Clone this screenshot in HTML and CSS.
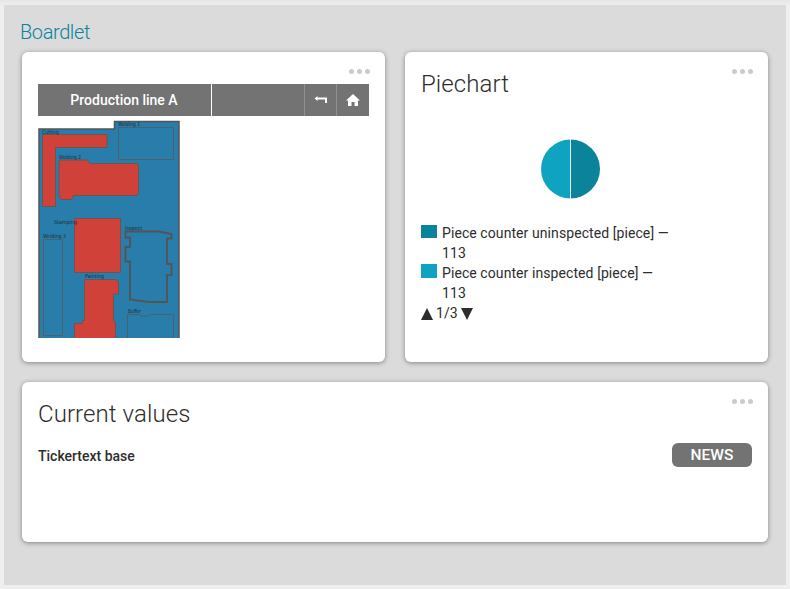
FILE: index.html
```html
<!DOCTYPE html>
<html lang="en">
<head>
<meta charset="utf-8">
<title>Boardlet</title>
<link rel="stylesheet" href="styles.css">
</head>
<body>
<main class="board">
  <h1 class="board-title">Boardlet</h1>
  <div class="cards">
    <section class="card card-plan">
      <div class="dots"><i></i><i></i><i></i></div>
      <div class="toolbar">
        <div class="line-name">Production line A</div>
        <div class="spacer"></div>
        <div class="tool">
          <svg width="14" height="10" viewBox="0 0 14 10"><path d="M.5 3.500 3.500 1V2.500H13V8H11V4.500H3.500V6Z" fill="#fff"/></svg>
        </div>
        <div class="tool">
          <svg width="14" height="12" viewBox="0 0 14 12"><path d="M7 0 14 6.500H12V12H8.500V8H5.500V12H2V6.500H0Z" fill="#fff"/></svg>
        </div>
      </div>
      <svg class="plan" width="142" height="218" viewBox="38 120 142 218">
        <path class="floor" d="M39 340V129H114.500V121.500H179V340"/>
        <g class="free">
          <path d="M118.500 127.500H173.500V159.500H118.500Z"/>
          <path d="M43.500 239.500H62.500V335.500H43.500Z"/>
          <path d="M127.500 340V314.500H140L141 316H149L150.500 314.500H173.500V336L171 340"/>
          <path class="thick" d="M125.500 231.500H159L171.500 234V238.500H167V264H171.500V275H167V302H148L130 299.500V261.500H125.500V247H130V237.500H125.500Z"/>
        </g>
        <g class="busy">
          <path d="M42.500 134.500H107V147.500H55.500V206.500H42.500Z"/>
          <path d="M59 160H87.500L89.500 163.500H137L138.500 166V192.500L137 195.500H73.500L71.500 199.500H61L59 196Z"/>
          <path d="M74.500 218.500H120.500V272.500H74.500Z"/>
          <path d="M84.500 279.500H115.500L118.500 281.500V294H113.500V320.500L115.500 323V340H74.500V323.500H82.500V320.500H84.500Z"/>
        </g>
        <g class="labels">
          <text x="42" y="134" textLength="17" lengthAdjust="spacingAndGlyphs">Cutting</text>
          <text x="118" y="126" textLength="22" lengthAdjust="spacingAndGlyphs">Welding 1</text>
          <text x="59" y="159" textLength="22" lengthAdjust="spacingAndGlyphs">Welding 2</text>
          <text x="54" y="224" textLength="23" lengthAdjust="spacingAndGlyphs">Stamping</text>
          <text x="43" y="238" textLength="23" lengthAdjust="spacingAndGlyphs">Welding 3</text>
          <text x="125" y="230" textLength="17" lengthAdjust="spacingAndGlyphs">Inspect</text>
          <text x="85" y="278" textLength="19" lengthAdjust="spacingAndGlyphs">Painting</text>
          <text x="128" y="313" textLength="13" lengthAdjust="spacingAndGlyphs">Buffer</text>
        </g>
      </svg>
    </section>
    <section class="card card-pie">
      <div class="dots"><i></i><i></i><i></i></div>
      <h2 class="card-title">Piechart</h2>
      <svg class="pie" width="60" height="60" viewBox="0 0 60 60">
        <path d="M29.500 .5A29.500 29.500 0 0 1 29.500 59.500Z" fill="#0a839b"/>
        <path d="M29.500 .5A29.500 29.500 0 0 0 29.500 59.500Z" fill="#0fa3c2"/>
        <path d="M29 0h1v60h-1z" fill="#fff"/>
      </svg>
      <div class="legend">
        <div class="entry"><i class="swatch dark"></i><div>Piece counter uninspected [piece] —<br>113</div></div>
        <div class="entry"><i class="swatch light"></i><div>Piece counter inspected [piece] —<br>113</div></div>
        <div class="pager">
          <svg width="12" height="12" viewBox="0 0 12 12"><path d="M6 0 12 12H0Z"/></svg>
          <span>1/3</span>
          <svg width="12" height="12" viewBox="0 0 12 12"><path d="M0 0H12L6 12Z"/></svg>
        </div>
      </div>
    </section>
    <section class="card card-values">
      <div class="dots"><i></i><i></i><i></i></div>
      <h2 class="card-title">Current values</h2>
      <div class="ticker"><span>Tickertext base</span><b class="news">NEWS</b></div>
    </section>
  </div>
</main>
</body>
</html>
```
FILE: styles.css
```css
* { box-sizing: border-box; }
body {
  margin: 0;
  height: 589px;
  padding: 5px 4px 4px;
  background: linear-gradient(#e6e6e6, #efefef 6px);
  font: 14px/20px Roboto, sans-serif;
  color: #2d2d2d;
  overflow: hidden;
}
.board { height: 580px; padding: 15px 18px 0; background: #dbdbdb; }
.board-title {
  margin: 0 0 8px -2px;
  font-size: 20px;
  line-height: 24px;
  font-weight: 300;
  letter-spacing: -.4px;
  color: #0a839b;
}
.cards { display: grid; grid-template-columns: 363px 363px; grid-template-rows: 310px 160px; gap: 20px; }
.card {
  position: relative;
  padding: 16px;
  background: #fff;
  border-radius: 6px;
  box-shadow: 0 1px 5px rgba(0, 0, 0, .4);
}
.card-plan { padding-top: 32px; }
.card-values { grid-column: 1 / 3; }
.dots { position: absolute; top: 17px; right: 15.500px; display: flex; gap: 2.700px; }
.dots i { width: 5px; height: 5px; border-radius: 50%; background: #cbcbcb; }
.card-title { margin: 0; font-size: 24px; line-height: 32px; font-weight: 300; letter-spacing: .08px; }
.toolbar { display: flex; height: 32px; color: #fff; }
.toolbar > div { background: #737373; }
.line-name { width: 173px; padding-right: 1px; text-align: center; line-height: 32px; font-weight: 500; }
.spacer { flex: 1; margin-left: 1px; }
.toolbar .tool { display: flex; align-items: center; justify-content: center; width: 32px; border-left: 1px solid #919191; }
.toolbar .tool:last-child { width: 33px; }
.plan { display: block; margin-top: 4px; }
.floor { fill: #287dab; stroke: #545454; stroke-width: 1.500; }
.free path { fill: none; stroke: #4d606b; stroke-width: 1; }
.free .thick { stroke: #545454; stroke-width: 1.800; }
.busy path { fill: #d04239; stroke: #71534e; stroke-width: 1; }
.labels { font: 5.500px "DejaVu Sans", sans-serif; fill: #1d2f39; }
.pie { display: block; margin: 39px 0 0 120px; }
.legend { margin-top: 24px; letter-spacing: .08px; }
.entry { display: flex; gap: 5px; white-space: nowrap; }
.swatch { width: 16px; height: 13px; margin-top: 2px; }
.dark { background: #0a839b; }
.light { background: #0fa3c2; margin-top: 1px; height: 14px; }
.pager { display: flex; gap: 3px; height: 20px; align-items: center; }
.pager svg { fill: #2d2d2d; margin-top: 2px; }
.ticker { display: flex; justify-content: space-between; align-items: center; margin-top: 13px; height: 24px; font-weight: 500; }
.ticker span { padding-top: 2px; }
.news { width: 80px; height: 24px; border-radius: 6px; background: #737373; color: #fff; font-size: 15.500px; line-height: 24px; font-weight: 500; text-align: center; }
```
